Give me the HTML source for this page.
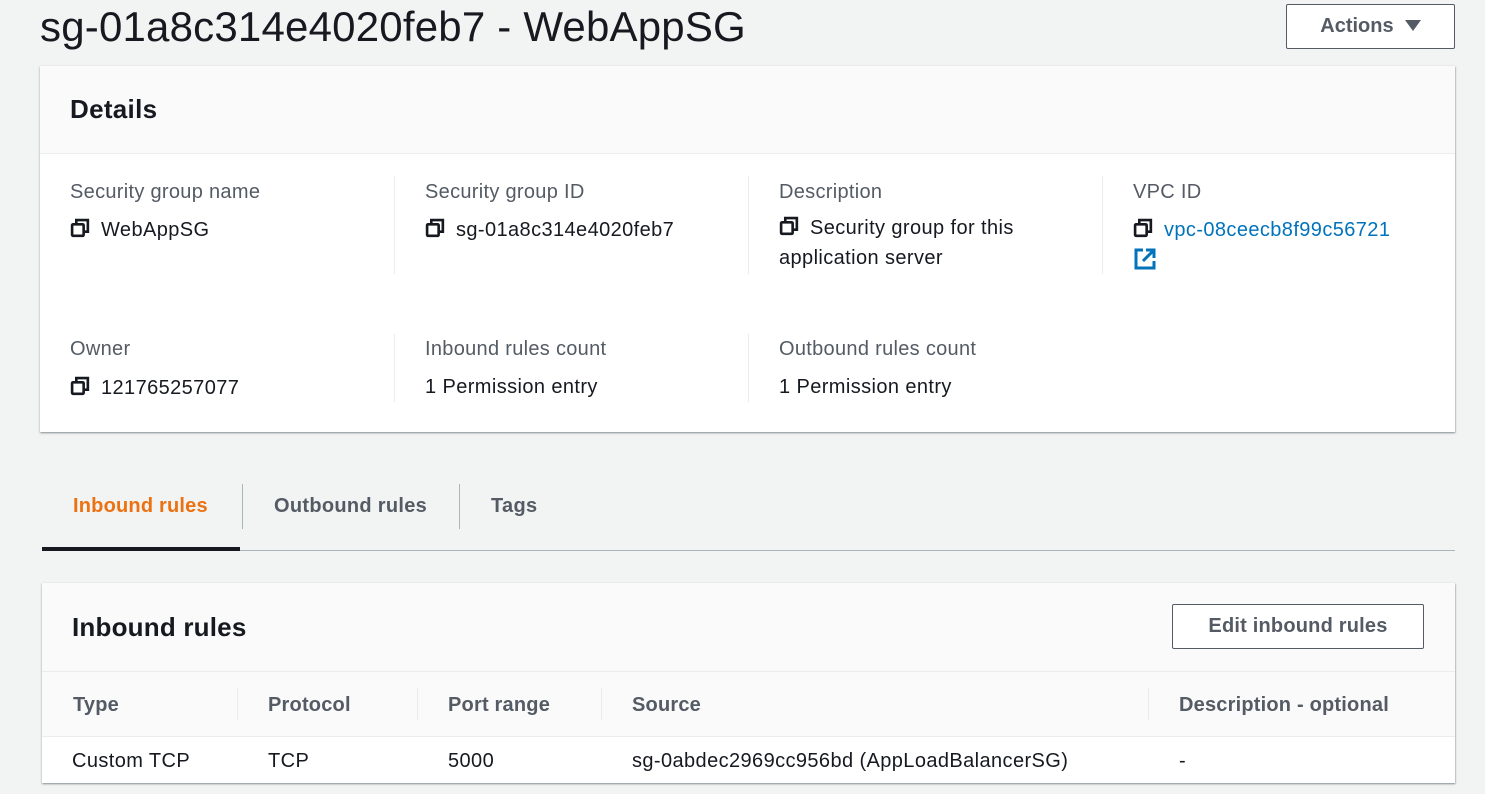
<!DOCTYPE html>
<html><head><style>
body{margin:0;width:1485px;height:794px;background:#f2f3f3;font-family:"Liberation Sans",sans-serif;position:relative;overflow:hidden;color:#16191f}
.a{position:absolute;white-space:nowrap}
.lab{font-size:20px;letter-spacing:.3px;color:#545b64}
.val{font-size:20px;letter-spacing:.4px;color:#16191f}
.vs{position:absolute;width:1px;background:#eaeded}
.cp{display:inline-block;vertical-align:-3px;margin-right:10px}
.th{font-size:20px;letter-spacing:.2px;font-weight:bold;color:#545b64}
</style></head><body>
<div class="a" style="left:40px;top:3px;font-size:42px;letter-spacing:.2px;color:#16191f">sg-01a8c314e4020feb7 - WebAppSG</div>
<div class="a" style="left:1286px;top:4px;width:169px;height:45px;border:1px solid #545b64;border-radius:2px;background:#fff;box-sizing:border-box;font-size:20px;font-weight:bold;color:#545b64;line-height:43px;text-align:center">Actions &nbsp;<svg width="16" height="12" viewBox="0 0 16 12" style="vertical-align:0"><path d="M0 0h16L8 11z" fill="#545b64"/></svg></div>

<div class="a" style="left:40px;top:66px;width:1415px;height:366px;background:#fff;box-shadow:0 1px 2px rgba(0,28,36,.4),1px 1px 1px rgba(0,28,36,.1)">
 <div style="height:87px;background:#fafafa;border-bottom:1px solid #eaeded"></div>
</div>
<div class="a" style="left:70px;top:94px;font-size:26px;letter-spacing:.3px;font-weight:bold">Details</div>

<svg width="0" height="0" style="position:absolute"><defs><symbol id="c" viewBox="0 0 20 20"><path d="M6 5V2h11v11h-3" fill="none" stroke="#16191f" stroke-width="2.5"/><rect x="2" y="6" width="11" height="11" rx="1" fill="none" stroke="#16191f" stroke-width="2.5"/></symbol></defs></svg>

<div class="a lab" style="left:70px;top:181px">Security group name</div>
<div class="a val" style="left:70px;top:218px"><svg class="cp" width="21" height="21"><use href="#c"/></svg>WebAppSG</div>
<div class="vs" style="left:394px;top:176px;height:98px"></div>
<div class="a lab" style="left:425px;top:181px">Security group ID</div>
<div class="a val" style="left:425px;top:218px"><svg class="cp" width="21" height="21"><use href="#c"/></svg>sg-01a8c314e4020feb7</div>
<div class="vs" style="left:748px;top:176px;height:98px"></div>
<div class="a lab" style="left:779px;top:181px">Description</div>
<div class="a val" style="left:779px;line-height:30px;top:213px"><svg class="cp" width="21" height="21"><use href="#c"/></svg>Security group for this<br>application server</div>
<div class="vs" style="left:1102px;top:176px;height:98px"></div>
<div class="a lab" style="left:1133px;top:181px">VPC ID</div>
<div class="a val" style="left:1133px;top:218px;color:#0073bb"><svg class="cp" width="21" height="21"><use href="#c"/></svg>vpc-08ceecb8f99c56721</div>
<svg class="a" style="left:1134px;top:248px" width="22" height="22" viewBox="0 0 22 22"><path d="M9 2H2v18h18v-7" fill="none" stroke="#0073bb" stroke-width="3"/><path d="M12 2h8v8M20 2L9 13" fill="none" stroke="#0073bb" stroke-width="3"/></svg>

<div class="a lab" style="left:70px;top:338px">Owner</div>
<div class="a val" style="left:70px;top:376px"><svg class="cp" width="21" height="21"><use href="#c"/></svg>121765257077</div>
<div class="vs" style="left:394px;top:334px;height:68px"></div>
<div class="a lab" style="left:425px;top:338px">Inbound rules count</div>
<div class="a val" style="left:425px;top:376px">1 Permission entry</div>
<div class="vs" style="left:748px;top:334px;height:68px"></div>
<div class="a lab" style="left:779px;top:338px">Outbound rules count</div>
<div class="a val" style="left:779px;top:376px">1 Permission entry</div>

<div class="a" style="left:73px;top:495px;font-size:20px;letter-spacing:.2px;font-weight:bold;color:#ec7211">Inbound rules</div>
<div class="a" style="left:242px;top:484px;width:1px;height:45px;background:#aab7b8"></div>
<div class="a" style="left:274px;top:495px;font-size:20px;letter-spacing:.3px;font-weight:bold;color:#545b64">Outbound rules</div>
<div class="a" style="left:459px;top:484px;width:1px;height:45px;background:#aab7b8"></div>
<div class="a" style="left:491px;top:495px;font-size:20px;letter-spacing:.3px;font-weight:bold;color:#545b64">Tags</div>
<div class="a" style="left:42px;top:550px;width:1413px;height:1px;background:#aab7b8"></div>
<div class="a" style="left:42px;top:547px;width:198px;height:4px;background:#16191f"></div>

<div class="a" style="left:42px;top:583px;width:1413px;height:200px;background:#fff;box-shadow:0 1px 2px rgba(0,28,36,.4),1px 1px 1px rgba(0,28,36,.1)">
 <div style="height:88px;background:#fafafa;border-bottom:1px solid #eaeded"></div>
 <div style="height:64px;background:#fafafa;border-bottom:1px solid #eaeded"></div>
</div>
<div class="a" style="left:72px;top:612px;font-size:26px;letter-spacing:.2px;font-weight:bold">Inbound rules</div>
<div class="a" style="left:1172px;top:604px;width:252px;height:45px;border:1px solid #545b64;border-radius:2px;background:#fff;box-sizing:border-box;font-size:20px;letter-spacing:.2px;font-weight:bold;color:#545b64;line-height:43px;text-align:center">Edit inbound rules</div>

<div class="a th" style="left:73px;top:694px">Type</div>
<div class="vs" style="left:237px;top:688px;height:32px"></div>
<div class="a th" style="left:268px;top:694px">Protocol</div>
<div class="vs" style="left:417px;top:688px;height:32px"></div>
<div class="a th" style="left:448px;top:694px">Port range</div>
<div class="vs" style="left:601px;top:688px;height:32px"></div>
<div class="a th" style="left:632px;top:694px">Source</div>
<div class="vs" style="left:1148px;top:688px;height:32px"></div>
<div class="a th" style="left:1179px;top:694px">Description - optional</div>

<div class="a val" style="left:72px;top:750px">Custom TCP</div>
<div class="a val" style="left:268px;top:750px">TCP</div>
<div class="a val" style="left:448px;top:750px">5000</div>
<div class="a val" style="left:632px;top:750px">sg-0abdec2969cc956bd (AppLoadBalancerSG)</div>
<div class="a val" style="left:1179px;top:750px">-</div>
</body></html>
